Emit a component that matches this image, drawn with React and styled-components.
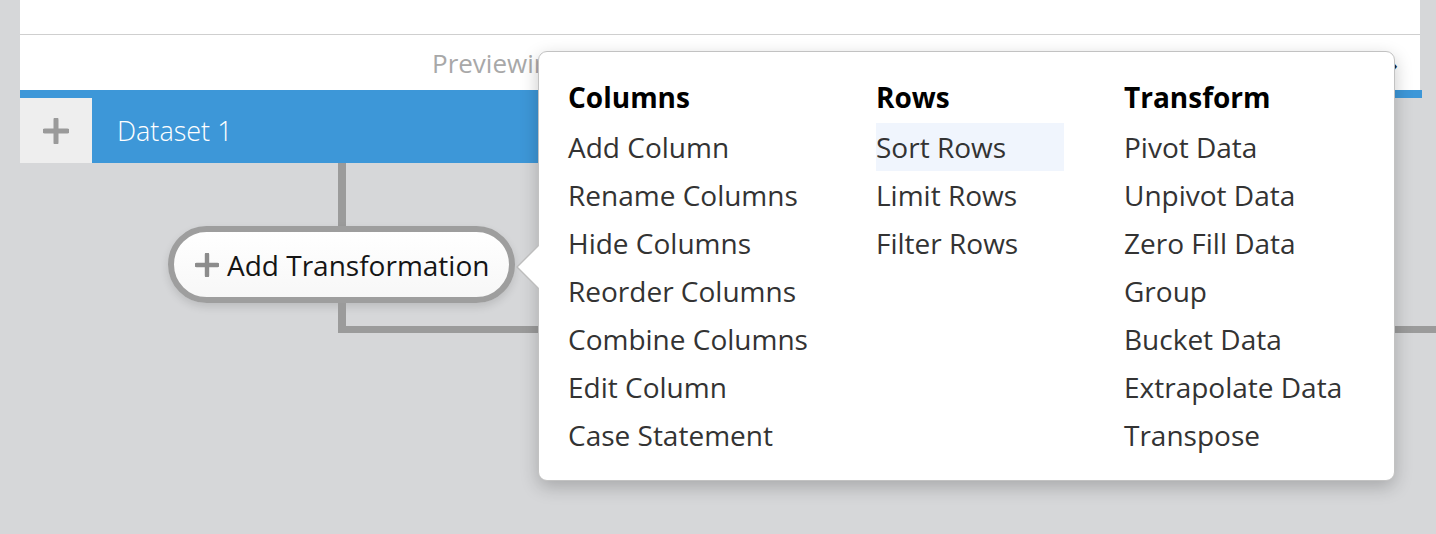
import React from "react"
import styled, { createGlobalStyle } from "styled-components"

const menu = [
  {
    title: "Columns",
    items: [
      "Add Column",
      "Rename Columns",
      "Hide Columns",
      "Reorder Columns",
      "Combine Columns",
      "Edit Column",
      "Case Statement",
    ],
  },
  { title: "Rows", items: ["Sort Rows", "Limit Rows", "Filter Rows"] },
  {
    title: "Transform",
    items: [
      "Pivot Data",
      "Unpivot Data",
      "Zero Fill Data",
      "Group",
      "Bucket Data",
      "Extrapolate Data",
      "Transpose",
    ],
  },
]

const GlobalStyle = createGlobalStyle`
  html, body {
    margin: 0;
    padding: 0;
    background: #d6d7d9;
    font-family: "Open Sans", "Liberation Sans", sans-serif;
  }
`

const PlusIcon = ({ size, color, weight }) => (
  <svg width={size} height={size} viewBox="0 0 24 24">
    <path
      d="M12 1.5v21M1.5 12h21"
      stroke={color}
      strokeWidth={weight}
      strokeLinecap="round"
      fill="none"
    />
  </svg>
)

export default function App() {
  return (
    <>
      <GlobalStyle />
      <Page>
        <Panel>
          <PanelTop />
          <PreviewRow>
            <PreviewText>Previewing first 100 rows of the dataset</PreviewText>
            <Chevron>›</Chevron>
          </PreviewRow>
        </Panel>
        <DatasetBar>
          <DatasetRow>
            <PlusBox>
              <PlusIcon size={26} color="#9a9a9a" weight={4.6} />
            </PlusBox>
            <DatasetTitle>Dataset 1</DatasetTitle>
          </DatasetRow>
        </DatasetBar>
        <Stem />
        <Pill>
          <PlusIcon size={24} color="#8c8c8c" weight={4.4} />
          <PillLabel>Add Transformation</PillLabel>
        </Pill>
        <Elbow />

        <Popup>
          {menu.map((group, index) => (
            <Group key={index}>
              <GroupTitle>{group.title}</GroupTitle>
              {group.items.map((item, i) => (
                <Item key={i} $active={item === "Sort Rows"}>
                  {item}
                </Item>
              ))}
            </Group>
          ))}
        </Popup>
      </Page>
    </>
  )
}

const Page = styled.div`
  position: relative;
  width: 1436px;
  height: 534px;
  overflow: hidden;
`

const Panel = styled.div`
  margin-left: 20px;
  width: 1400px;
  background: #fff;
`

const PanelTop = styled.div`
  height: 34px;
  border-bottom: 1px solid #cfcfcf;
`

const PreviewRow = styled.div`
  display: flex;
  align-items: center;
  height: 55px;
  padding-left: 412px;
  padding-right: 22px;
`

const PreviewText = styled.span`
  font-size: 26px;
  color: #a8a8a8;
  white-space: nowrap;
`

const Chevron = styled.span`
  margin-left: auto;
  font-size: 28px;
  color: #222;
`

const DatasetBar = styled.div`
  margin-left: 20px;
  width: 1402px;
  border-top: 8px solid #3d97d8;
`

const DatasetRow = styled.div`
  display: flex;
  width: 1300px;
  height: 65px;
  background: #3d97d8;
`

const PlusBox = styled.div`
  display: flex;
  align-items: center;
  justify-content: center;
  width: 72px;
  background: #eeeeee;
`

const DatasetTitle = styled.div`
  display: flex;
  align-items: center;
  padding-left: 25px;
  font-size: 27px;
  font-weight: 300;
  color: #fff;
`

const Stem = styled.div`
  margin-left: 338px;
  width: 8px;
  height: 63px;
  background: #9b9b9b;
`

const Pill = styled.div`
  display: flex;
  align-items: center;
  gap: 8px;
  box-sizing: border-box;
  margin-left: 168px;
  width: 347px;
  height: 77px;
  padding-left: 21px;
  border: 6px solid #9e9e9e;
  border-radius: 40px;
  background: linear-gradient(#ffffff, #f7f7f7);
  box-shadow: 0 4px 8px rgba(0, 0, 0, 0.12);
`

const PillLabel = styled.span`
  font-size: 28px;
  color: #151515;
  white-space: nowrap;
`

const Elbow = styled.div`
  margin-left: 338px;
  height: 23px;
  border-left: 8px solid #9b9b9b;
  border-bottom: 7px solid #9b9b9b;
`

const Popup = styled.div`
  position: absolute;
  left: 538px;
  top: 51px;
  box-sizing: border-box;
  display: grid;
  grid-template-columns: 248px 188px 1fr;
  column-gap: 60px;
  width: 857px;
  height: 430px;
  padding: 21px 30px 20px 29px;
  background: #fff;
  border: 1px solid #c2c2c2;
  border-radius: 9px;
  box-shadow: 0 6px 18px rgba(0, 0, 0, 0.22);

  &::before,
  &::after {
    content: "";
    position: absolute;
    top: 193px;
    border-style: solid;
    border-color: transparent;
  }

  &::before {
    left: -23px;
    border-width: 22px 22px 22px 0;
    border-right-color: #bdbdbd;
  }

  &::after {
    left: -21px;
    border-width: 22px 22px 22px 0;
    border-right-color: #fff;
  }
`

const Group = styled.div`
  display: flex;
  flex-direction: column;
`

const GroupTitle = styled.div`
  height: 48px;
  margin-bottom: 2px;
  line-height: 48px;
  font-size: 28px;
  font-weight: 700;
  color: #000;
`

const Item = styled.div`
  height: 48px;
  line-height: 48px;
  font-size: 28px;
  color: #333;
  white-space: nowrap;
  background: ${(p) => (p.$active ? "#f0f5fd" : "transparent")};
`
